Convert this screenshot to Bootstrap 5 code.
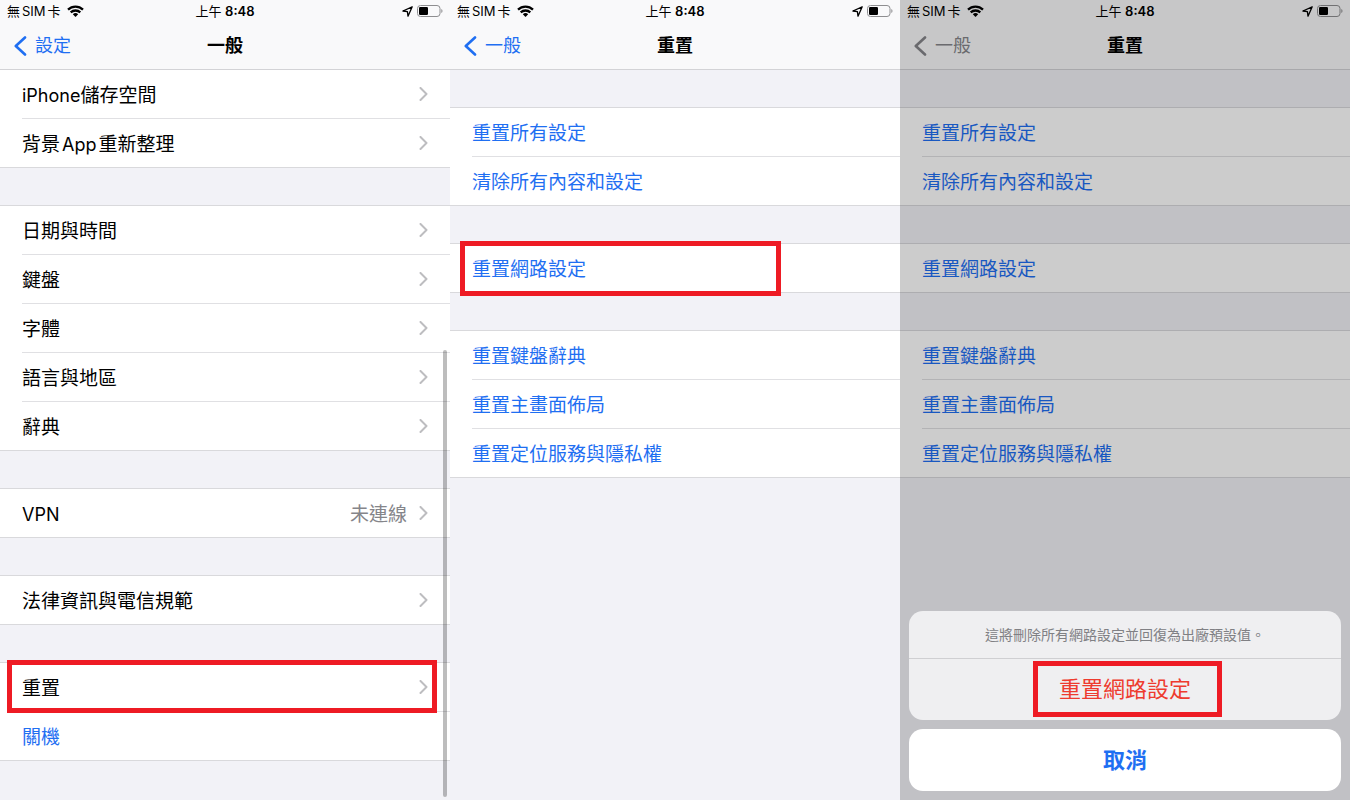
<!DOCTYPE html>
<html lang="zh-Hant">
<head>
<meta charset="utf-8">
<meta name="viewport" content="width=device-width, initial-scale=1">
<title>重置網路設定</title>
<link href="https://cdn.jsdelivr.net/npm/bootstrap@5.3.0/dist/css/bootstrap.min.css" rel="stylesheet">
<style>
  body { font-family: Inter, "Noto Sans CJK TC", sans-serif; color: #000; background: #f2f2f7; }
  .phone { background: #f2f2f7; overflow: hidden; }
  .topbar { background: #f9f9fa; border-bottom: 1px solid #d3d3d6; }
  .status { height: 22px; font-size: 13px; line-height: 22px; padding: 0 7px; }
  .status > * { flex: 1 1 0; }
  .carrier { gap: 6px; }
  .sim { margin: 0 2px; }
  .titlebar { height: 47px; font-size: 18px; line-height: 47px; padding: 0 14px; }
  .titlebar > * { flex: 1 1 0; }
  .titlebar h1 { font-size: 18px; line-height: 47px; font-weight: 600; }
  .ios-blue { color: #1f6ff2; }
  .ios-gray { color: #85858a; }
  .group { background: #fff; border-top: 1px solid #d9d9dc; border-bottom: 1px solid #d9d9dc; margin-top: 37px; }
  .group.first { margin-top: 0; border-top: 0; }
  .cell { padding-left: 22px; font-size: 19px; line-height: 28px; color: #000; }
  .cell.ios-blue { color: #1f6ff2; }
  .cell-body { height: 48px; padding-right: 22px; gap: 12px; }
  .cell-body > span { padding-top: 3px; }
  .cell:not(:last-child) .cell-body { height: 49px; border-bottom: 1px solid #e0e0e3; }
  .latin { font-size: 18px; }
  .latin-mid { margin: 0 2px; }
  .marker { border: 5px solid #ee1b24; pointer-events: none; z-index: 2; }
  .mark-row { inset: -3px 13px -1px 7px; }
  .mark-option { inset: -3px 119px -4px 10px; }
  .mark-action { inset: 2px 119px 3px 124px; }
  .scroll-thumb { width: 4px; right: 3px; top: 350px; bottom: 3px; border-radius: 2px; background: rgba(0,0,0,.26); z-index: 1; }
  .dim { background: rgba(0,0,0,.2); z-index: 1; }
  .sheet { inset: auto 9px 9px 9px; gap: 9px; z-index: 2; }
  .sheet-box { border-radius: 14px; background: #efeff1; }
  .sheet-note { font-size: 14px; line-height: 47px; color: #808084; border-bottom: 1px solid #cfcfd2; }
  .sheet-btn { height: 61px; font-size: 22px; background: transparent; border: 0; border-radius: 14px; }
  .sheet-btn.danger { color: #ee3b2f; }
  .sheet-btn.cancel { height: 62px; background: #fff; color: #1f6ff2; font-weight: 600; }
</style>
</head>
<body>
<svg width="0" height="0" class="position-absolute" aria-hidden="true">
  <symbol id="wifi" viewBox="0 0 17 12">
    <path d="M1 4.700a10.800 10.800 0 0 1 15 0M3.700 7.400a7 7 0 0 1 9.600 0" fill="none" stroke="#000" stroke-width="2.300"/>
    <path d="M8.500 12 5.800 9.300a3.900 3.900 0 0 1 5.400 0z"/>
  </symbol>
  <symbol id="location" viewBox="0 0 11 11">
    <path d="M10.200.8.9 5l4.500.6.600 4.600z" fill="none" stroke="#000" stroke-width="1.300" stroke-linejoin="round"/>
  </symbol>
  <symbol id="battery" viewBox="0 0 26 12">
    <rect x=".5" y=".5" width="22.500" height="11" rx="3" fill="none" stroke="#8e8e90"/>
    <rect x="2" y="2" width="9" height="8" rx="1.200"/>
    <path d="M24.300 4v4c1.600-.6 1.600-3.400 0-4z" fill="#8e8e90"/>
  </symbol>
  <symbol id="back" viewBox="0 0 13 20">
    <path d="M11 1.500 1.800 10l9.200 8.500" fill="none" stroke="currentColor" stroke-width="2.600" stroke-linecap="round" stroke-linejoin="round"/>
  </symbol>
  <symbol id="next" viewBox="0 0 9 14">
    <path d="m1.500 1 6 6-6 6" fill="none" stroke="#bdbdc0" stroke-width="2" stroke-linecap="round" stroke-linejoin="round"/>
  </symbol>
</svg>

<main class="row g-0 min-vh-100">

  <section class="phone col-4 position-relative">
    <header class="topbar">
      <div class="status d-flex">
        <div class="carrier d-flex align-items-center"><span>無<span class="sim">SIM</span>卡</span><svg width="17" height="12"><use href="#wifi"/></svg></div>
        <div class="text-center">上午 <span class="fw-semibold">8:48</span></div>
        <div class="d-flex align-items-center justify-content-end gap-1"><svg width="11" height="11"><use href="#location"/></svg><svg width="26" height="12"><use href="#battery"/></svg></div>
      </div>
      <nav class="titlebar d-flex">
        <div><a href="#" class="ios-blue text-decoration-none d-inline-flex align-items-center gap-2"><svg width="13" height="20"><use href="#back"/></svg>設定</a></div>
        <h1 class="text-center m-0">一般</h1>
        <div></div>
      </nav>
    </header>
    <div class="group first">
      <a href="#" class="cell d-block text-decoration-none"><span class="cell-body d-flex align-items-center"><span class="me-auto"><span class="latin">iPhone</span>儲存空間</span><svg width="9" height="14"><use href="#next"/></svg></span></a>
      <a href="#" class="cell d-block text-decoration-none"><span class="cell-body d-flex align-items-center"><span class="me-auto">背景<span class="latin latin-mid">App</span>重新整理</span><svg width="9" height="14"><use href="#next"/></svg></span></a>
    </div>
    <div class="group">
      <a href="#" class="cell d-block text-decoration-none"><span class="cell-body d-flex align-items-center"><span class="me-auto">日期與時間</span><svg width="9" height="14"><use href="#next"/></svg></span></a>
      <a href="#" class="cell d-block text-decoration-none"><span class="cell-body d-flex align-items-center"><span class="me-auto">鍵盤</span><svg width="9" height="14"><use href="#next"/></svg></span></a>
      <a href="#" class="cell d-block text-decoration-none"><span class="cell-body d-flex align-items-center"><span class="me-auto">字體</span><svg width="9" height="14"><use href="#next"/></svg></span></a>
      <a href="#" class="cell d-block text-decoration-none"><span class="cell-body d-flex align-items-center"><span class="me-auto">語言與地區</span><svg width="9" height="14"><use href="#next"/></svg></span></a>
      <a href="#" class="cell d-block text-decoration-none"><span class="cell-body d-flex align-items-center"><span class="me-auto">辭典</span><svg width="9" height="14"><use href="#next"/></svg></span></a>
    </div>
    <div class="group">
      <a href="#" class="cell d-block text-decoration-none"><span class="cell-body d-flex align-items-center"><span class="me-auto latin">VPN</span><span class="ios-gray">未連線</span><svg width="9" height="14"><use href="#next"/></svg></span></a>
    </div>
    <div class="group">
      <a href="#" class="cell d-block text-decoration-none"><span class="cell-body d-flex align-items-center"><span class="me-auto">法律資訊與電信規範</span><svg width="9" height="14"><use href="#next"/></svg></span></a>
    </div>
    <div class="group">
      <a href="#" class="cell d-block text-decoration-none position-relative"><span class="cell-body d-flex align-items-center"><span class="me-auto">重置</span><svg width="9" height="14"><use href="#next"/></svg></span><span class="marker mark-row position-absolute"></span></a>
      <a href="#" class="cell ios-blue d-block text-decoration-none"><span class="cell-body d-flex align-items-center"><span>關機</span></span></a>
    </div>
    <div class="scroll-thumb position-absolute"></div>
  </section>

  <section class="phone col-4 position-relative">
    <header class="topbar">
      <div class="status d-flex">
        <div class="carrier d-flex align-items-center"><span>無<span class="sim">SIM</span>卡</span><svg width="17" height="12"><use href="#wifi"/></svg></div>
        <div class="text-center">上午 <span class="fw-semibold">8:48</span></div>
        <div class="d-flex align-items-center justify-content-end gap-1"><svg width="11" height="11"><use href="#location"/></svg><svg width="26" height="12"><use href="#battery"/></svg></div>
      </div>
      <nav class="titlebar d-flex">
        <div><a href="#" class="ios-blue text-decoration-none d-inline-flex align-items-center gap-2"><svg width="13" height="20"><use href="#back"/></svg>一般</a></div>
        <h1 class="text-center m-0">重置</h1>
        <div></div>
      </nav>
    </header>
    <div class="group">
      <a href="#" class="cell ios-blue d-block text-decoration-none"><span class="cell-body d-flex align-items-center"><span>重置所有設定</span></span></a>
      <a href="#" class="cell ios-blue d-block text-decoration-none"><span class="cell-body d-flex align-items-center"><span>清除所有內容和設定</span></span></a>
    </div>
    <div class="group">
      <a href="#" class="cell ios-blue d-block text-decoration-none position-relative"><span class="cell-body d-flex align-items-center"><span>重置網路設定</span></span><span class="marker mark-option position-absolute"></span></a>
    </div>
    <div class="group">
      <a href="#" class="cell ios-blue d-block text-decoration-none"><span class="cell-body d-flex align-items-center"><span>重置鍵盤辭典</span></span></a>
      <a href="#" class="cell ios-blue d-block text-decoration-none"><span class="cell-body d-flex align-items-center"><span>重置主畫面佈局</span></span></a>
      <a href="#" class="cell ios-blue d-block text-decoration-none"><span class="cell-body d-flex align-items-center"><span>重置定位服務與隱私權</span></span></a>
    </div>
  </section>

  <section class="phone col-4 position-relative">
    <header class="topbar">
      <div class="status d-flex">
        <div class="carrier d-flex align-items-center"><span>無<span class="sim">SIM</span>卡</span><svg width="17" height="12"><use href="#wifi"/></svg></div>
        <div class="text-center">上午 <span class="fw-semibold">8:48</span></div>
        <div class="d-flex align-items-center justify-content-end gap-1"><svg width="11" height="11"><use href="#location"/></svg><svg width="26" height="12"><use href="#battery"/></svg></div>
      </div>
      <nav class="titlebar d-flex">
        <div><a href="#" class="ios-gray text-decoration-none d-inline-flex align-items-center gap-2"><svg width="13" height="20"><use href="#back"/></svg>一般</a></div>
        <h1 class="text-center m-0">重置</h1>
        <div></div>
      </nav>
    </header>
    <div class="group">
      <a href="#" class="cell ios-blue d-block text-decoration-none"><span class="cell-body d-flex align-items-center"><span>重置所有設定</span></span></a>
      <a href="#" class="cell ios-blue d-block text-decoration-none"><span class="cell-body d-flex align-items-center"><span>清除所有內容和設定</span></span></a>
    </div>
    <div class="group">
      <a href="#" class="cell ios-blue d-block text-decoration-none"><span class="cell-body d-flex align-items-center"><span>重置網路設定</span></span></a>
    </div>
    <div class="group">
      <a href="#" class="cell ios-blue d-block text-decoration-none"><span class="cell-body d-flex align-items-center"><span>重置鍵盤辭典</span></span></a>
      <a href="#" class="cell ios-blue d-block text-decoration-none"><span class="cell-body d-flex align-items-center"><span>重置主畫面佈局</span></span></a>
      <a href="#" class="cell ios-blue d-block text-decoration-none"><span class="cell-body d-flex align-items-center"><span>重置定位服務與隱私權</span></span></a>
    </div>
    <div class="dim position-absolute top-0 bottom-0 start-0 end-0"></div>
    <div class="sheet position-absolute d-flex flex-column" role="dialog" aria-label="重置網路設定">
      <div class="sheet-box">
        <p class="sheet-note text-center m-0">這將刪除所有網路設定並回復為出廠預設值。</p>
        <div class="position-relative">
          <button type="button" class="sheet-btn danger w-100">重置網路設定</button>
          <span class="marker mark-action position-absolute"></span>
        </div>
      </div>
      <button type="button" class="sheet-btn cancel w-100">取消</button>
    </div>
  </section>

</main>
<script src="https://cdn.jsdelivr.net/npm/bootstrap@5.3.0/dist/js/bootstrap.bundle.min.js"></script>
</body>
</html>
